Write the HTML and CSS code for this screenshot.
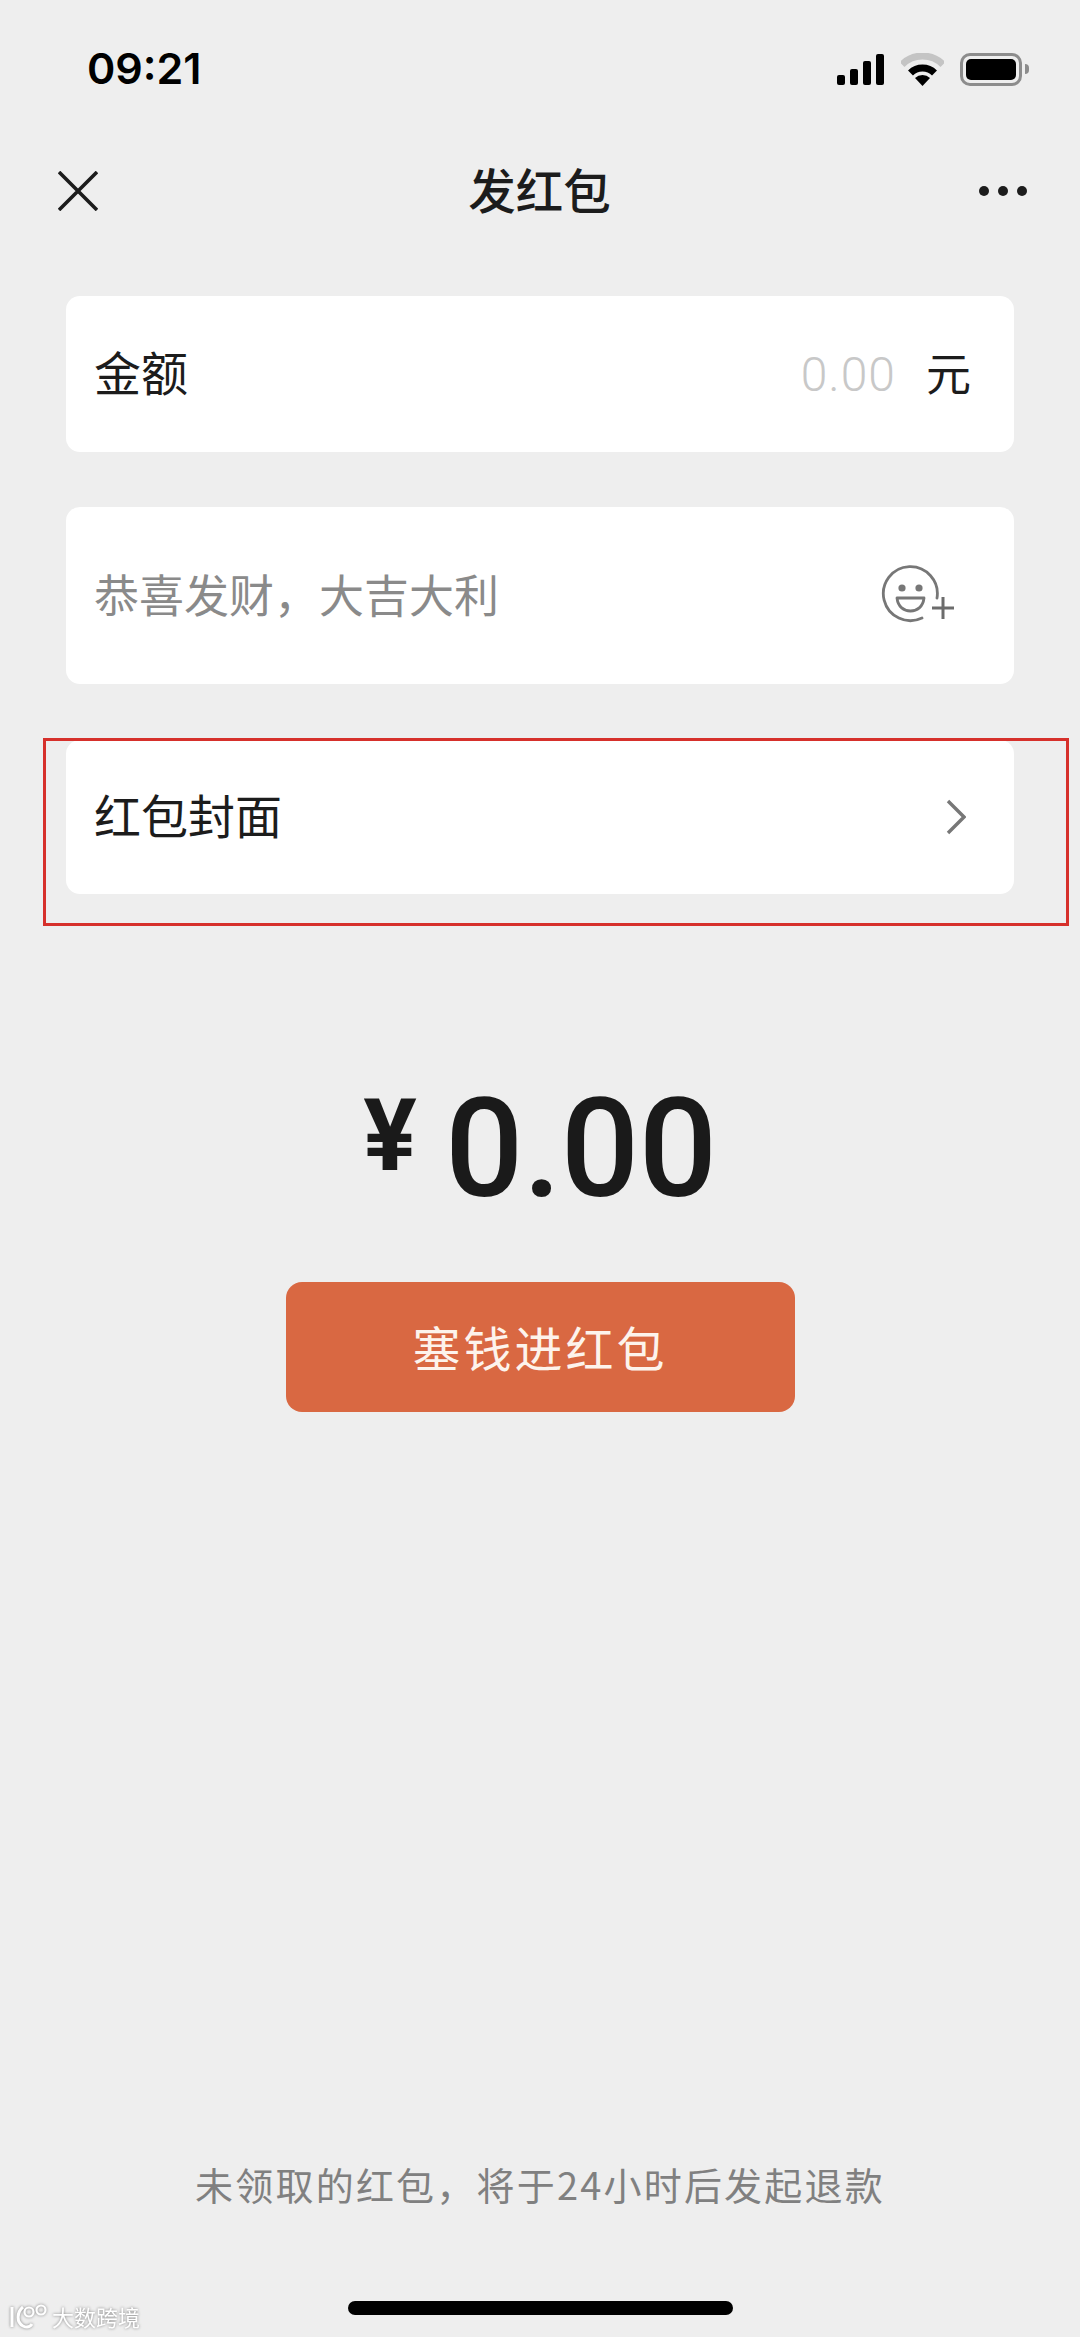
FILE: index.html
```html
<!DOCTYPE html>
<html lang="zh-CN">
<head>
    <meta charset="UTF-8">
    <meta name="viewport" content="width=device-width, initial-scale=1.0">
    <title>发红包</title>
    <link rel="stylesheet" href="styles.css">
</head>
<body>
    <div class="page">
        <div class="status-bar">
            <span class="time">09:21</span>
            <div class="status-icons">
                <svg class="icon-signal" width="47" height="31" viewBox="0 0 47 31">
                    <rect x="0" y="21" width="8" height="10" rx="2"/>
                    <rect x="13" y="15" width="8" height="16" rx="2"/>
                    <rect x="26" y="7" width="8" height="24" rx="2"/>
                    <rect x="39" y="0" width="8" height="31" rx="2"/>
                </svg>
                <svg class="icon-wifi" width="43" height="33" viewBox="0 0 43 33">
                    <path d="M1 11.5A29 29 0 0 1 42 11.5" fill="none" stroke="#c4c4c4" stroke-width="7"/>
                    <path d="M9.5 20A17 17 0 0 1 33.5 20" fill="none" stroke="#000" stroke-width="7"/>
                    <path d="M21.5 33L14 25A11 11 0 0 1 29 25Z" fill="#000"/>
                </svg>
                <div class="battery">
                    <div class="battery-fill"></div>
                </div>
                <div class="battery-nub"></div>
            </div>
        </div>

        <div class="nav-bar">
            <svg class="nav-close" width="40" height="40" viewBox="0 0 40 40">
                <path d="M1 1L39 39M39 1L1 39" fill="none" stroke="#1c1c1c" stroke-width="3.6"/>
            </svg>
            <h1 class="nav-title">发红包</h1>
            <div class="nav-more">
                <span class="dot"></span>
                <span class="dot"></span>
                <span class="dot"></span>
            </div>
        </div>

        <div class="form">
            <div class="card card-amount">
                <span class="card-label">金额</span>
                <span class="amount-placeholder">0.00</span>
                <span class="amount-unit">元</span>
            </div>
            <div class="card card-message">
                <span class="message-placeholder">恭喜发财，大吉大利</span>
                <svg class="icon-emoji" width="74" height="60" viewBox="0 0 74 60">
                    <path d="M57 34A27 27 0 1 0 42 54" fill="none" stroke="#777" stroke-width="2.8" stroke-linecap="round"/>
                    <circle cx="22" cy="24" r="3.6" fill="#777"/>
                    <circle cx="39" cy="24" r="3.6" fill="#777"/>
                    <path d="M17 34H44C43 43 37 47 30.5 47C24 47 18 43 17 34Z" fill="none" stroke="#777" stroke-width="2.8" stroke-linejoin="round"/>
                    <path d="M52 44H74M63 33V55" fill="none" stroke="#6c6c6c" stroke-width="3"/>
                </svg>
            </div>
            <div class="card card-cover">
                <span class="card-label">红包封面</span>
                <svg class="icon-chevron" width="20" height="36" viewBox="0 0 20 36">
                    <path d="M2 2L18 18L2 34" fill="none" stroke="#777" stroke-width="3.4"/>
                </svg>
            </div>
            <div class="annotation"></div>
        </div>

        <div class="total">
            <span class="total-currency">¥</span>
            <span class="total-value">0.00</span>
        </div>

        <button class="send-button">塞钱进红包</button>

        <p class="refund-note">未领取的红包，将于24小时后发起退款</p>

        <div class="home-indicator"></div>

        <div class="watermark">
            <svg width="39" height="26" viewBox="0 0 39 26">
                <path d="M2 4V24M13 4C7 9 6 19 13 23C17 25 20 24 22 21" fill="none" stroke="#fff" stroke-width="3"/>
                <circle cx="19" cy="9" r="4.5" fill="none" stroke="#fff" stroke-width="2.2"/>
                <circle cx="31" cy="7" r="4.5" fill="none" stroke="#fff" stroke-width="2.2"/>
            </svg>
            <span class="watermark-text">大数跨境</span>
        </div>
    </div>
</body>
</html>
```

FILE: styles.css
```css
* {
    box-sizing: border-box;
}
body {
    margin: 0;
    background-color: #eeeeee;
    font-family: "Noto Sans CJK SC", "Noto Sans", sans-serif;
    color: #1c1c1c;
}
.page {
    position: relative;
    width: 1080px;
    height: 2337px;
    display: flex;
    flex-direction: column;
    align-items: center;
    overflow: hidden;
    background-color: #eeeeee;
}

/* status bar */
.status-bar {
    width: 100%;
    height: 138px;
    padding: 0 51px 0 87px;
    display: flex;
    align-items: center;
    justify-content: space-between;
}
.time {
    margin-bottom: 2px;
    font-family: Inter, sans-serif;
    font-size: 43px;
    font-weight: 600;
    color: #000;
}
.status-icons {
    display: flex;
    align-items: center;
}
.icon-signal {
    fill: #000;
    margin-right: 17px;
}
.icon-wifi {
    margin-right: 16px;
}
.battery {
    width: 62px;
    height: 33px;
    padding: 3px;
    border: 3px solid #8c8c8c;
    border-radius: 10px;
}
.battery-fill {
    height: 100%;
    background-color: #000;
    border-radius: 5px;
}
.battery-nub {
    width: 4px;
    height: 10px;
    margin-left: 3px;
    background-color: #8c8c8c;
    border-radius: 0 4px 4px 0;
}

/* nav */
.nav-bar {
    width: 100%;
    height: 106px;
    padding: 0 53px 0 58px;
    display: flex;
    align-items: center;
    justify-content: space-between;
}
.nav-title {
    margin: 0 0 5px 2px;
    font-size: 47.5px;
    font-weight: 500;
}
.nav-more {
    display: flex;
    gap: 9px;
}
.dot {
    width: 10px;
    height: 10px;
    border-radius: 50%;
    background-color: #1c1c1c;
}

/* cards */
.form {
    position: relative;
    width: 948px;
    margin-top: 52px;
    display: flex;
    flex-direction: column;
}
.card {
    padding: 0 30px 0 28px;
    display: flex;
    align-items: center;
    background-color: #fff;
    border-radius: 14px;
}
.card-amount {
    height: 156px;
}
.card-message {
    height: 177px;
    margin-top: 55px;
    justify-content: space-between;
}
.card-cover {
    height: 154px;
    margin-top: 56px;
    justify-content: space-between;
}
.card-label {
    margin-bottom: 7px;
    font-size: 47px;
}
.amount-placeholder {
    margin-left: auto;
    font-family: Roboto, sans-serif;
    font-size: 48px;
    font-weight: 300;
    letter-spacing: 1px;
    color: #c8c8c8;
}
.amount-unit {
    margin-bottom: 6px;
    margin-left: 30px;
    margin-right: 13px;
    font-size: 45px;
}
.message-placeholder {
    margin-bottom: 4px;
    font-size: 45px;
    color: #8a8a8a;
}
.icon-emoji {
    margin-right: 30px;
    margin-bottom: 3px;
}
.icon-chevron {
    margin-right: 18px;
}
.annotation {
    position: absolute;
    left: -23px;
    right: -55px;
    bottom: -32px;
    height: 188px;
    border: 3px solid #d6302b;
}

/* total and button */
.total {
    margin-top: 180px;
    height: 150px;
    display: flex;
    align-items: center;
    justify-content: center;
    font-family: Roboto, sans-serif;
    font-weight: 500;
    color: #1a1a1a;
}
.total-currency {
    margin-right: 28px;
    margin-bottom: 26px;
    font-size: 100px;
    font-weight: 700;
    line-height: 1;
}
.total-value {
    font-size: 138px;
    letter-spacing: -0.5px;
}
.send-button {
    width: 509px;
    height: 130px;
    margin-top: 58px;
    padding-bottom: 4px;
    border: none;
    border-radius: 16px;
    background-color: #d96842;
    color: #fdf3ec;
    font-family: inherit;
    font-size: 48px;
    letter-spacing: 3px;
}
.refund-note {
    margin: auto 0 126px;
    font-size: 38px;
    letter-spacing: 2.2px;
    color: #808080;
}
.home-indicator {
    position: absolute;
    left: 348px;
    top: 2301px;
    width: 385px;
    height: 14px;
    background-color: #000;
    border-radius: 7px;
}
.watermark {
    position: absolute;
    left: 10px;
    top: 2300px;
    display: flex;
    align-items: center;
    gap: 3px;
    filter: drop-shadow(0 0 1.5px #808080);
}
.watermark-text {
    font-size: 22px;
    color: #fff;
}
```
